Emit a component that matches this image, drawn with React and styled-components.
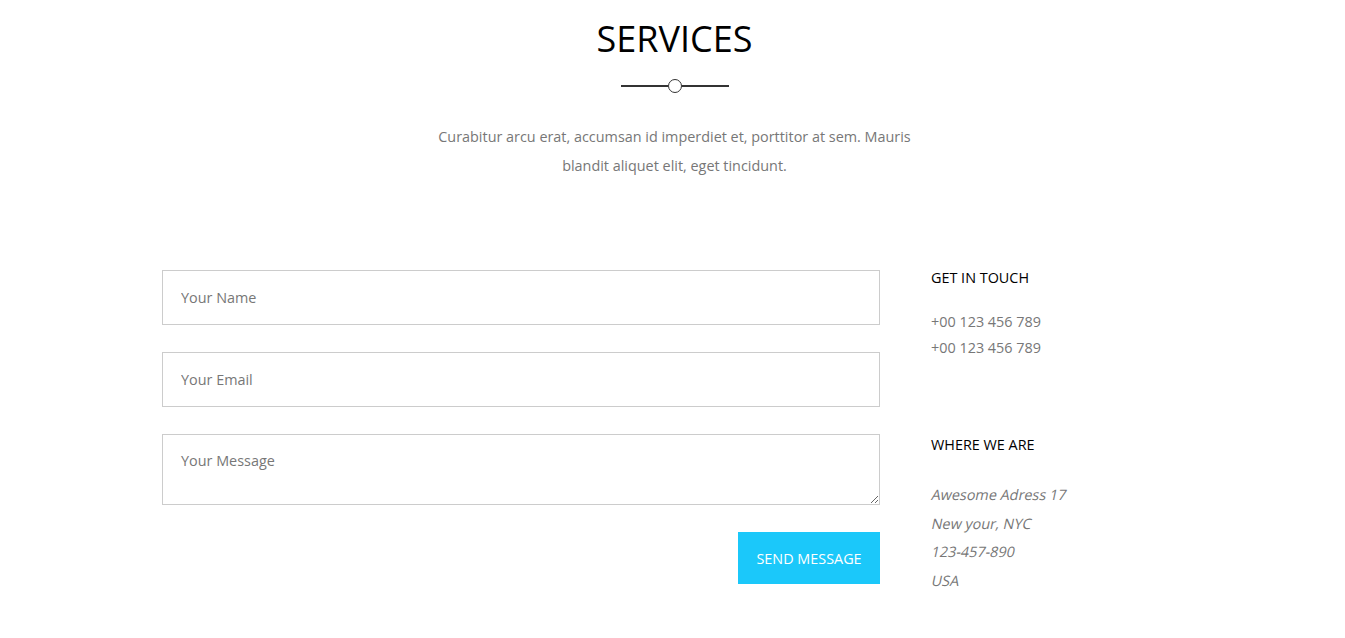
import React from "react";
import styled, { createGlobalStyle } from "styled-components";

const GlobalStyle = createGlobalStyle`
  html, body {
    margin: 0;
    padding: 0;
    background: #ffffff;
  }
  body {
    font-family: "Open Sans", "Liberation Sans", sans-serif;
    color: #777777;
  }
  * {
    box-sizing: border-box;
  }
`;

const addressLines = ["Awesome Adress 17", "New your, NYC", "123-457-890", "USA"];

const App = () => {
  return (
    <Section>
      <GlobalStyle />
      <Header>
        <Title>SERVICES</Title>
        <Divider>
          <Line />
          <Dot />
          <Line />
        </Divider>
        <Intro>
          Curabitur arcu erat, accumsan id imperdiet et, porttitor at sem. Mauris
          blandit aliquet elit, eget tincidunt.
        </Intro>
      </Header>

      <Content>
        <Form onSubmit={(e) => e.preventDefault()}>
          <Input type="text" placeholder="Your Name" />
          <Input type="email" placeholder="Your Email" />
          <TextArea placeholder="Your Message" />
          <Actions>
            <SendButton type="submit">Send Message</SendButton>
          </Actions>
        </Form>

        <Aside>
          <InfoBlock>
            <InfoTitle>Get in touch</InfoTitle>
            <Phones>
              <div>+00 123 456 789</div>
              <div>+00 123 456 789</div>
            </Phones>
          </InfoBlock>
          <InfoBlock>
            <InfoTitle>Where we are</InfoTitle>
            <Address>
              {addressLines.map((line) => (
                <AddressLine key={line}>{line}</AddressLine>
              ))}
            </Address>
          </InfoBlock>
        </Aside>
      </Content>
    </Section>
  );
};

export default App;

const Section = styled.section`
  width: 1025px;
  margin: 0 auto;
  padding: 19px 0 40px;
  position: relative;
  left: 2px;
`;

const Header = styled.div`
  display: flex;
  flex-direction: column;
  align-items: center;
  text-align: center;
`;

const Title = styled.h2`
  margin: 0;
  font-size: 36px;
  line-height: 40px;
  font-weight: 400;
  color: #000000;
`;

const Divider = styled.div`
  display: flex;
  align-items: center;
  margin-top: 20px;
  height: 14px;
`;

const Line = styled.span`
  display: block;
  width: 47px;
  height: 2px;
  background: #333333;
`;

const Dot = styled.span`
  display: block;
  width: 14px;
  height: 14px;
  border: 1.5px solid #333333;
  border-radius: 50%;
  background: #ffffff;
`;

const Intro = styled.p`
  width: 490px;
  margin: 29px 0 0;
  font-size: 14.4px;
  line-height: 29px;
  color: #777777;
`;

const Content = styled.div`
  display: grid;
  grid-template-columns: 718px 1fr;
  column-gap: 51px;
  margin-top: 90px;
`;

const Form = styled.form`
  display: flex;
  flex-direction: column;
  gap: 27px;
`;

const fieldBase = `
  width: 100%;
  border: 1px solid #cccccc;
  border-radius: 0;
  padding: 0 18px;
  font-family: "Open Sans", "Liberation Sans", sans-serif;
  font-size: 14.4px;
  color: #555555;
  background: #ffffff;
  outline: none;
  &::placeholder {
    color: #777777;
    opacity: 1;
  }
`;

const Input = styled.input`
  ${fieldBase}
  height: 55px;
  padding-bottom: 1px;
`;

const TextArea = styled.textarea`
  ${fieldBase}
  height: 71px;
  padding-top: 16px;
  line-height: 20px;
  display: block;
`;

const Actions = styled.div`
  display: flex;
  justify-content: flex-end;
`;

const SendButton = styled.button`
  width: 142px;
  height: 52px;
  border: none;
  background: #1bc8fa;
  color: #ffffff;
  font-family: "Open Sans", "Liberation Sans", sans-serif;
  font-size: 14.4px;
  text-transform: uppercase;
  cursor: pointer;
`;

const Aside = styled.div`
  display: flex;
  flex-direction: column;
  gap: 75px;
  margin-top: -1px;
`;

const InfoBlock = styled.div`
  display: flex;
  flex-direction: column;
`;

const InfoTitle = styled.h4`
  margin: 0 0 22px;
  font-size: 14.4px;
  line-height: 18px;
  font-weight: 400;
  text-transform: uppercase;
  color: #000000;
`;

const Phones = styled.div`
  font-size: 14.4px;
  line-height: 26px;
  color: #777777;
`;

const Address = styled.address`
  font-size: 14.4px;
  line-height: 28.7px;
  font-style: normal;
  color: #777777;
  margin-top: 5px;
`;

const AddressLine = styled.span`
  display: block;
  transform: skewX(-12deg);
  transform-origin: left 62%;
`;
